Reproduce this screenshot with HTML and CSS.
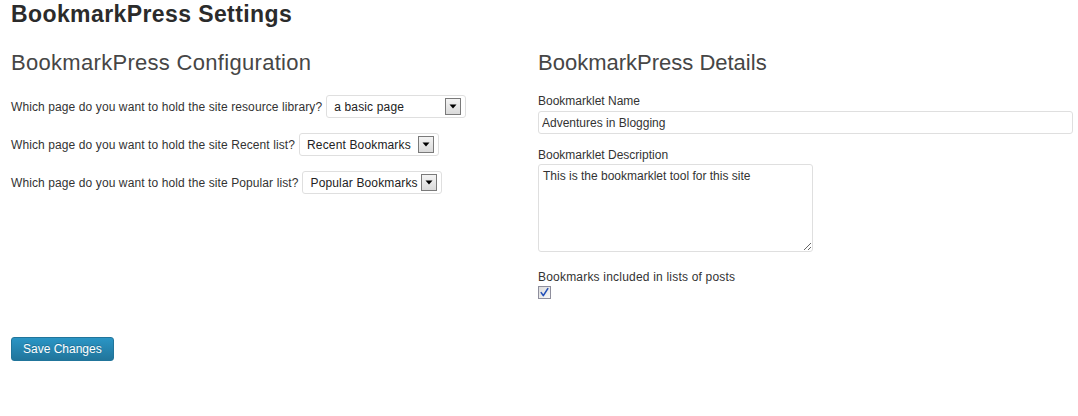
FILE: index.html
```html
<!DOCTYPE html>
<html lang="en">
<head>
<meta charset="utf-8">
<title>BookmarkPress Settings</title>
<link rel="stylesheet" href="styles.css">
</head>
<body>
<div class="wrap">
  <h1 class="page-title">BookmarkPress Settings</h1>
  <form class="settings">
    <div class="columns">
      <section class="col col-left">
        <h2 class="section-title section-config">BookmarkPress Configuration</h2>
        <div class="rows">
          <div class="row">
            <span class="row-label">Which page do you want to hold the site resource library?</span>
            <div class="select"><span class="select-value">a basic page</span><span class="select-arrow"><svg width="8" height="5" viewBox="0 0 8 5"><path d="M0.5 0.5h7l-3.5 4z" fill="#000"/></svg></span></div>
          </div>
          <div class="row">
            <span class="row-label">Which page do you want to hold the site Recent list?</span>
            <div class="select"><span class="select-value">Recent Bookmarks</span><span class="select-arrow"><svg width="8" height="5" viewBox="0 0 8 5"><path d="M0.5 0.5h7l-3.5 4z" fill="#000"/></svg></span></div>
          </div>
          <div class="row">
            <span class="row-label">Which page do you want to hold the site Popular list?</span>
            <div class="select"><span class="select-value">Popular Bookmarks</span><span class="select-arrow"><svg width="8" height="5" viewBox="0 0 8 5"><path d="M0.5 0.5h7l-3.5 4z" fill="#000"/></svg></span></div>
          </div>
        </div>
      </section>
      <section class="col col-right">
        <h2 class="section-title">BookmarkPress Details</h2>
        <label class="field-label field-first" for="bm-name">Bookmarklet Name</label>
        <input class="text-input" id="bm-name" type="text" value="Adventures in Blogging">
        <label class="field-label field-desc" for="bm-desc">Bookmarklet Description</label>
        <textarea class="text-area" id="bm-desc">This is the bookmarklet tool for this site</textarea>
        <div class="field-label field-check">Bookmarks included in lists of posts</div>
        <span class="checkbox"><svg width="11" height="11" viewBox="0 0 11 11"><path d="M2.2 5.6 L4.3 8.6 L8.8 1.6" fill="none" stroke="#2450b8" stroke-width="1.6" stroke-linejoin="round" stroke-linecap="round"/></svg></span>
      </section>
    </div>
    <div class="submit">
      <button class="button-primary" type="button">Save Changes</button>
    </div>
  </form>
</div>
</body>
</html>
```
FILE: styles.css
```css
html, body {
  margin: 0;
  padding: 0;
  background: #fff;
}
body {
  font-family: "Liberation Sans", Arial, sans-serif;
  font-size: 12px;
  color: #333;
}
.wrap {
  padding: 0 5px 0 11px;
}
.page-title {
  margin: 0;
  font-size: 23px;
  line-height: 29px;
  letter-spacing: 0.4px;
  font-weight: bold;
  color: #2b2b2b;
}
.columns {
  display: flex;
}
.col-left {
  flex: 0 0 527px;
}
.col-right {
  flex: 1 1 auto;
  display: flex;
  flex-direction: column;
  align-items: flex-start;
}
.section-title {
  margin: 20px 0 0;
  font-size: 22px;
  line-height: 28px;
  font-weight: normal;
  color: #464646;
}
.section-config {
  letter-spacing: 0.3px;
}
.rows {
  display: flex;
  flex-direction: column;
  gap: 15px;
  margin-top: 18px;
}
.row {
  display: flex;
  align-items: center;
  gap: 4px;
  height: 23px;
}
.row-label {
  line-height: 16px;
  letter-spacing: 0.1px;
}
.select {
  box-sizing: border-box;
  width: 140px;
  height: 23px;
  border: 1px solid #dfdfdf;
  border-radius: 3px;
  background: #fff;
  display: flex;
  align-items: center;
  color: #222;
}
.select-value {
  flex: 1 1 auto;
  padding-left: 7px;
  white-space: nowrap;
  letter-spacing: 0.15px;
}
.select-arrow {
  box-sizing: border-box;
  flex: 0 0 16px;
  height: 17px;
  margin-right: 4px;
  border: 1px solid #7a7a7a;
  background: linear-gradient(#f4f4f4, #dadada);
  display: flex;
  align-items: center;
  justify-content: center;
}
.select-arrow svg {
  display: block;
}
.field-label {
  line-height: 16px;
  color: #333;
}
.field-first {
  margin-top: 16px;
}
.text-input {
  box-sizing: border-box;
  margin: 2px 0 0;
  width: 535px;
  height: 23px;
  padding: 0 3px;
  border: 1px solid #dfdfdf;
  border-radius: 3px;
  font-family: inherit;
  font-size: 12px;
  color: #333;
  background: #fff;
  outline: none;
}
.field-desc {
  margin-top: 13px;
}
.text-area {
  box-sizing: border-box;
  margin: 1px 0 0;
  width: 275px;
  height: 88px;
  padding: 3px 4px;
  border: 1px solid #dfdfdf;
  border-radius: 3px;
  font-family: inherit;
  font-size: 12px;
  line-height: 16px;
  color: #333;
  background: #fff;
  resize: both;
  outline: none;
}
.field-check {
  margin-top: 17px;
  letter-spacing: 0.2px;
}
.checkbox {
  box-sizing: border-box;
  margin-top: 1px;
  width: 13px;
  height: 13px;
  border: 1px solid #8f8f9d;
  background: linear-gradient(135deg, #dcdcdc, #f8f8f8);
  display: flex;
  align-items: center;
  justify-content: center;
}
.submit {
  margin-top: 38px;
}
.button-primary {
  box-sizing: border-box;
  height: 24px;
  padding: 0 11px;
  border: 1px solid #21759b;
  border-radius: 3px;
  background: linear-gradient(#2a95c5, #21759b);
  color: #fff;
  font-family: inherit;
  font-size: 12px;
  line-height: 22px;
  text-shadow: 0 -1px 0 rgba(0, 0, 0, 0.2);
  cursor: pointer;
}
```
